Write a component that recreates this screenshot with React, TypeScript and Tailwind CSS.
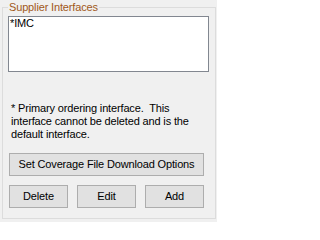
const BTN =
  "h-[23px] border border-[#adadad] bg-[#e1e1e1] text-[11px] leading-none text-black";

export default function App() {
  return (
    <div className="h-[222px] w-[217px] bg-[#f0f0f0] text-[11px] tracking-[-0.15px] text-black [font-family:'Liberation_Sans',Arial,sans-serif]">
      <fieldset className="ml-[2px] h-[219px] w-[214px] border border-[#dcdcdc]">
        <legend className="ml-[5px] px-[1px] leading-[14px] text-[#a0581a]">Supplier Interfaces</legend>

        <div className="ml-[5px] mt-[2px] h-[56px] w-[201px] border border-[#828790] bg-white px-[1px] leading-[13px]">
          *IMC
        </div>

        <p className="ml-[8px] mt-[30px] whitespace-pre leading-[13px]">
          {"* Primary ordering interface.  This\ninterface cannot be deleted and is the\ndefault interface."}
        </p>

        <button className={`${BTN} ml-[6px] mt-[12px] w-[195px]`}>Set Coverage File Download Options</button>

        <div className="ml-[6px] mt-[9px] flex gap-[9px]">
          <button className={`${BTN} w-[59px]`}>Delete</button>
          <button className={`${BTN} w-[59px]`}>Edit</button>
          <button className={`${BTN} w-[59px]`}>Add</button>
        </div>
      </fieldset>
    </div>
  );
}
